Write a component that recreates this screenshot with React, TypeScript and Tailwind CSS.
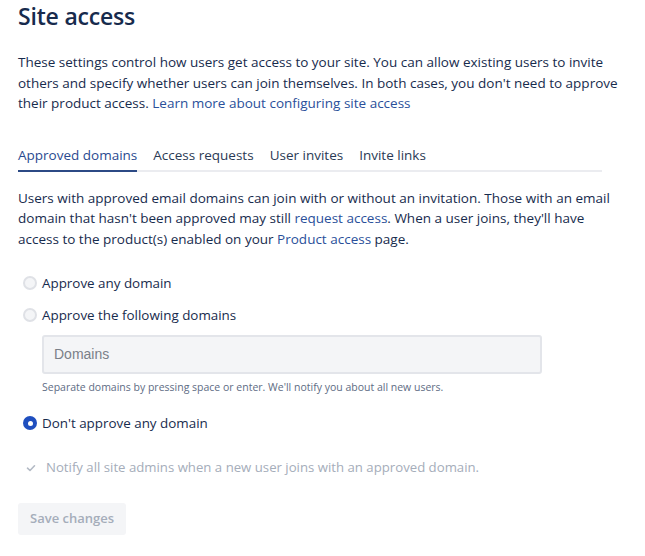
import React, { useState } from 'react';

const Radio: React.FC<{ checked: boolean; label: string; onSelect: () => void }> = ({ checked, label, onSelect }) => (
  <label className="flex items-center gap-[5px] cursor-pointer" onClick={onSelect}>
    <span
      className={
        checked
          ? 'w-[14px] h-[14px] rounded-full bg-[#1f4fbf] flex items-center justify-center'
          : 'w-[14px] h-[14px] rounded-full bg-[#f4f5f7] border-2 border-[#dfe1e6]'
      }
    >
      {checked && <span className="w-[5px] h-[5px] rounded-full bg-white" />}
    </span>
    <span className="text-[13.4px] text-[#172b4d]">{label}</span>
  </label>
);

const App: React.FC = () => {
  const [choice, setChoice] = useState('none');
  const tabs = ['Approved domains', 'Access requests', 'User invites', 'Invite links'];

  return (
    <div className="w-[645px] h-[556px] bg-white px-[18px] text-[#172b4d]" style={{ fontFamily: '"Open Sans", "Noto Sans", sans-serif' }}>
      <h1 className="text-[23px] font-semibold leading-[32px] pt-0 tracking-[-0.2px]">Site access</h1>

      <p className="mt-[20px] text-[13.5px] leading-[20.5px] w-[600px]">
        These settings control how users get access to your site. You can allow existing users to invite others and specify whether users can join themselves. In both cases, you don't need to approve their product access.{' '}
        <a className="text-[#2a4f9a]">Learn more about configuring site access</a>
      </p>

      {/* Tabs */}
      <div className="mt-[31px] w-[584px] flex gap-[16px] border-b-2 border-[#ebecf0] text-[13.5px]">
        {tabs.map((t, i) => (
          <div
            key={t}
            className={
              i === 0
                ? 'pb-[5px] -mb-[2px] border-b-2 border-[#2c4a85] text-[#2a4a8f] font-medium'
                : 'pb-[5px] text-[#2b3a55] font-medium'
            }
          >
            {t}
          </div>
        ))}
      </div>

      <p className="mt-[16px] text-[13.5px] leading-[20.5px] w-[600px]">
        Users with approved email domains can join with or without an invitation. Those with an email domain that hasn't been approved may still <a className="text-[#2a4f9a]">request access</a>. When a user joins, they'll have access to the product(s) enabled on your <a className="text-[#2a4f9a]">Product access</a> page.
      </p>

      <div className="mt-[24px] pl-[5px] flex flex-col gap-[12px]">
        <Radio checked={choice === 'any'} label="Approve any domain" onSelect={() => setChoice('any')} />
        <Radio checked={choice === 'following'} label="Approve the following domains" onSelect={() => setChoice('following')} />
      </div>

      <div className="ml-[24px] mt-[10px] w-[500px]">
        <div className="h-[39px] bg-[#f4f5f7] border-2 border-[#e3e5ea] rounded-[3px] flex items-center px-[10px]">
          <span className="text-[14px] text-[#7a7f88]" style={{ fontFamily: '"Liberation Sans", Arial, sans-serif' }}>Domains</span>
        </div>
        <p className="mt-[6px] text-[10.5px] text-[#5e6c84]">Separate domains by pressing space or enter. We'll notify you about all new users.</p>
      </div>

      <div className="mt-[17px] pl-[5px]">
        <Radio checked={choice === 'none'} label="Don't approve any domain" onSelect={() => setChoice('none')} />
      </div>

      <div className="mt-[25px] pl-[7px] flex items-center gap-[9px]">
        <svg width="12" height="12" viewBox="0 0 12 12">
          <path d="M2.5 6.2 L5 8.5 L9.5 3.8" fill="none" stroke="#b3bac5" strokeWidth="1.6" strokeLinecap="round" strokeLinejoin="round" />
        </svg>
        <span className="text-[13.2px] text-[#a5adba]">Notify all site admins when a new user joins with an approved domain.</span>
      </div>

      <button className="mt-[25px] h-[32px] px-[12px] bg-[#f4f5f7] rounded-[3px] text-[13px] font-semibold text-[#a5adba]">
        Save changes
      </button>
    </div>
  );
};

export default App;
